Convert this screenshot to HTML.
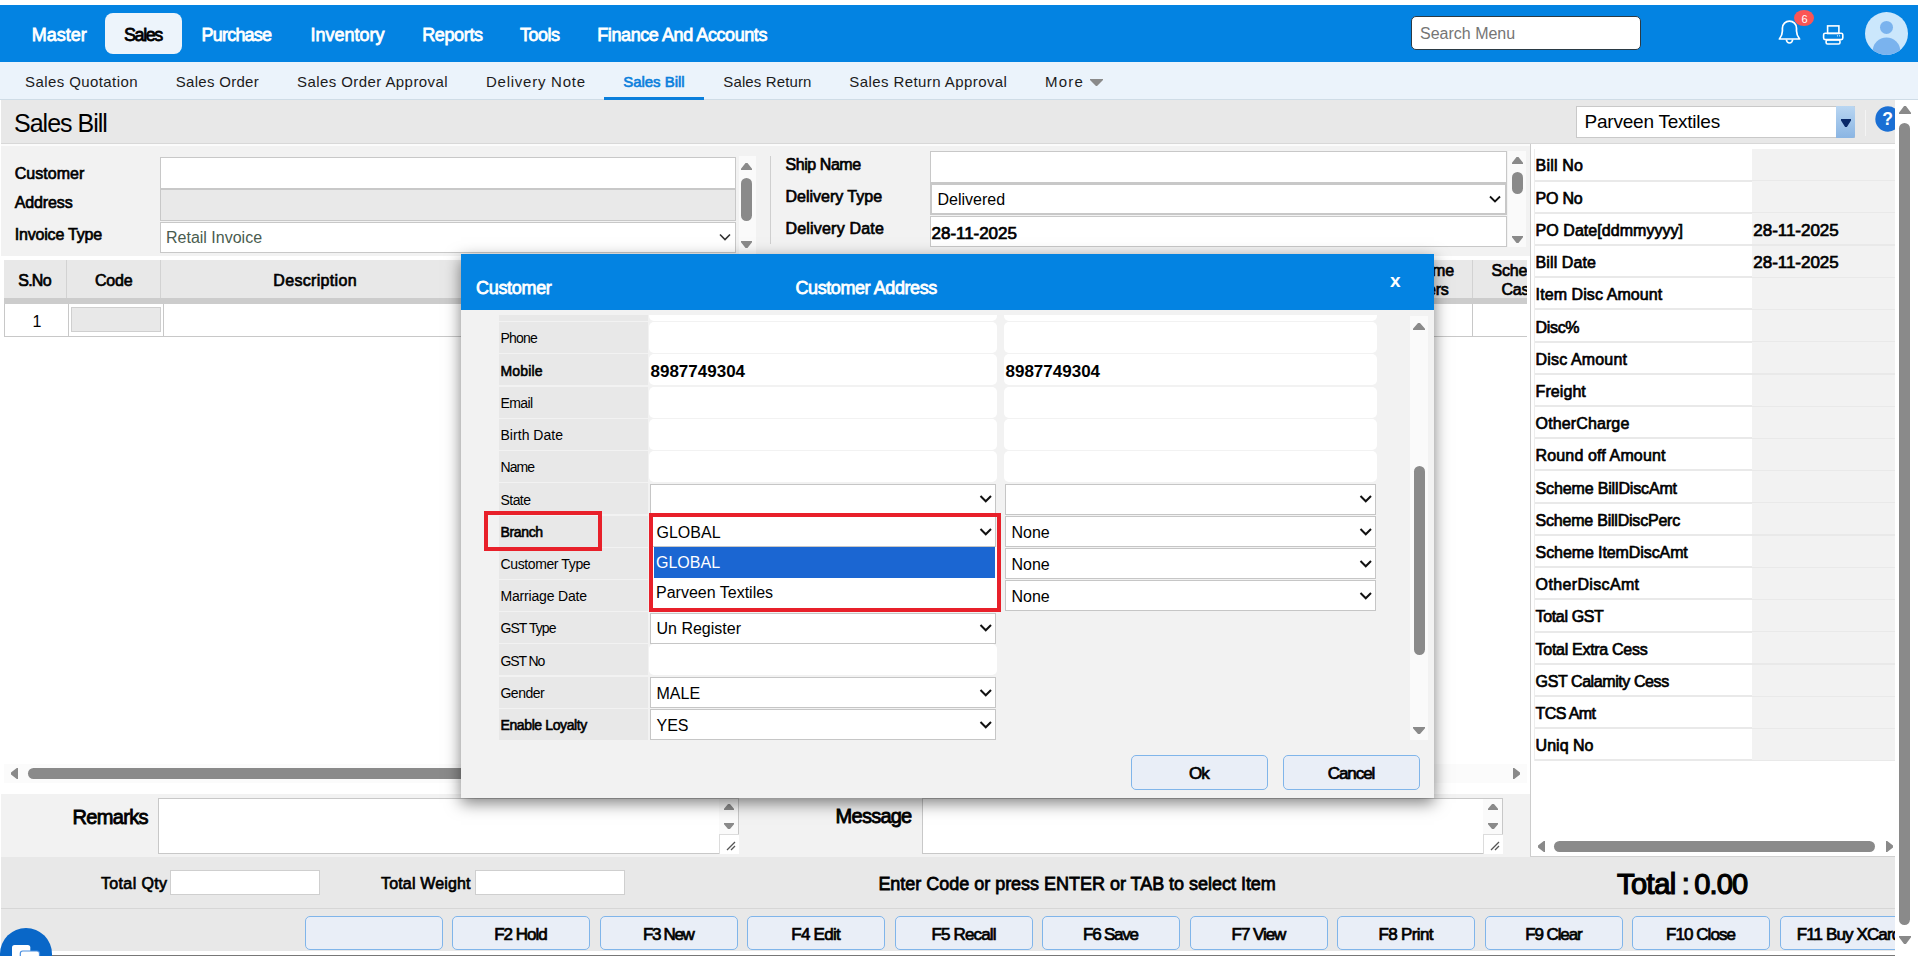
<!DOCTYPE html>
<html><head><meta charset="utf-8">
<style>
*{box-sizing:border-box}
html,body{margin:0;padding:0}
body{width:1918px;height:956px;overflow:hidden;position:relative;background:#fff;font-family:"Liberation Sans",sans-serif;color:#000}
.a{position:absolute}
.t{position:absolute;white-space:nowrap;line-height:1}
</style></head>
<body>
<div class="a" style="left:0px;top:5px;width:1918px;height:57px;background:#0383e2"></div>
<div class="a" style="left:105px;top:13px;width:77px;height:41px;background:#edf4fb;border-radius:8px"></div>
<div class="t" style="left:31.75px;top:26px;font-size:18px;-webkit-text-stroke-width:0.76px;color:#fff;letter-spacing:-0.01px">Master</div>
<div class="t" style="left:124px;top:26px;font-size:18px;-webkit-text-stroke-width:0.76px;color:#000;letter-spacing:-1.425px">Sales</div>
<div class="t" style="left:201.6px;top:26px;font-size:18px;-webkit-text-stroke-width:0.76px;color:#fff;letter-spacing:-0.8px">Purchase</div>
<div class="t" style="left:310.4px;top:26px;font-size:18px;-webkit-text-stroke-width:0.76px;color:#fff;letter-spacing:0.0px">Inventory</div>
<div class="t" style="left:422.2px;top:26px;font-size:18px;-webkit-text-stroke-width:0.76px;color:#fff;letter-spacing:-0.367px">Reports</div>
<div class="t" style="left:520px;top:26px;font-size:18px;-webkit-text-stroke-width:0.76px;color:#fff;letter-spacing:-0.5px">Tools</div>
<div class="t" style="left:597.3px;top:26px;font-size:18px;-webkit-text-stroke-width:0.76px;color:#fff;letter-spacing:-0.421px">Finance And Accounts</div>
<div class="a" style="left:1411px;top:16px;width:230px;height:34px;background:#fff;border:1px solid #2b3a44;border-radius:5px"></div>
<div class="t" style="left:1420px;top:26px;font-size:16px;color:#757575">Search Menu</div>
<svg class="a" style="left:1770px;top:5px" width="80" height="50" viewBox="0 0 80 50">
<path d="M9.4 34 C11.6 31.2 12.4 29 12.4 26 V23.2 A7.05 7.05 0 0 1 26.5 23.2 V26 C26.5 29 27.4 31.2 29.6 34 Z" fill="none" stroke="#fff" stroke-width="1.7" stroke-linejoin="round"/>
<path d="M16.4 34.6 A3.1 3.4 0 0 0 22.6 34.6" fill="none" stroke="#fff" stroke-width="1.7"/>
<ellipse cx="34" cy="13" rx="10" ry="8" fill="#fb5555"/>
<text x="34.5" y="18" font-family="Liberation Sans" font-size="11" fill="#fff" text-anchor="middle">6</text>
<rect x="57.6" y="20.9" width="11.3" height="7.6" fill="none" stroke="#fff" stroke-width="1.6"/>
<rect x="53.6" y="28.2" width="19.2" height="6.4" rx="1.6" fill="none" stroke="#fff" stroke-width="1.6"/>
<rect x="56.1" y="35" width="13.9" height="4" rx="1.4" fill="none" stroke="#fff" stroke-width="1.6"/>
<circle cx="67.5" cy="30.8" r="0.6" fill="#fff"/><circle cx="69.5" cy="30.8" r="0.6" fill="#fff"/>
</svg>
<svg class="a" style="left:1865px;top:12.3px" width="43" height="43" viewBox="0 0 43 43"><defs><clipPath id="cp"><circle cx="21.5" cy="21.5" r="21.5"/></clipPath></defs><circle cx="21.5" cy="21.5" r="21.5" fill="#cbe7fc"/><g clip-path="url(#cp)"><circle cx="21.5" cy="15.4" r="6.5" fill="#7ab3ee"/><ellipse cx="21.5" cy="39.2" rx="13.8" ry="13.7" fill="#7ab3ee"/></g></svg>
<div class="a" style="left:0px;top:62px;width:1918px;height:37px;background:#ebf3fb"></div>
<div class="a" style="left:0px;top:99px;width:1918px;height:1px;background:#cfdce6"></div>
<div class="t" style="left:25px;top:74px;font-size:15px;color:#1b1b1b;letter-spacing:0.414px">Sales Quotation</div>
<div class="t" style="left:175.8px;top:74px;font-size:15px;color:#1b1b1b;letter-spacing:0.29px">Sales Order</div>
<div class="t" style="left:297px;top:74px;font-size:15px;color:#1b1b1b;letter-spacing:0.421px">Sales Order Approval</div>
<div class="t" style="left:486px;top:74px;font-size:15px;color:#1b1b1b;letter-spacing:0.75px">Delivery Note</div>
<div class="t" style="left:723.3px;top:74px;font-size:15px;color:#1b1b1b;letter-spacing:0.127px">Sales Return</div>
<div class="t" style="left:849.3px;top:74px;font-size:15px;color:#1b1b1b;letter-spacing:0.42px">Sales Return Approval</div>
<div class="t" style="left:1045px;top:74px;font-size:15px;color:#1b1b1b;letter-spacing:1.233px">More</div>
<div class="t" style="left:623.2px;top:74px;font-size:15px;-webkit-text-stroke-width:0.63px;color:#0a7fdc;letter-spacing:-0.022px">Sales Bill</div>
<div class="a" style="left:604px;top:97px;width:100px;height:3px;background:#0a7fdc"></div>
<svg class="a" style="left:1089.5px;top:79.25px" width="13" height="6.5" viewBox="0 0 13 6.5"><path d="M0 0 L6.5 6.5 L13 0 Z" fill="#8a8a8a" stroke="#8a8a8a" stroke-width="1.5" stroke-linejoin="round"/></svg>
<div class="a" style="left:1px;top:100px;width:1894px;height:856px;background:#e8e8e8"></div>
<div class="t" style="left:14px;top:111px;font-size:25px;color:#000;letter-spacing:-1.0px">Sales Bill</div>
<div class="a" style="left:1px;top:143px;width:1894px;height:1px;background:#d8d8d8"></div>
<div class="a" style="left:1576px;top:106px;width:279px;height:32px;background:#fff;border:1px solid #c9c9c9"></div>
<div class="t" style="left:1584.6px;top:112px;font-size:19px;color:#000;letter-spacing:-0.233px">Parveen Textiles</div>
<div class="a" style="left:1836px;top:106px;width:19px;height:32px;background:linear-gradient(#b9d6f2,#8ab5e3);border-radius:0 2px 2px 0"></div>
<svg class="a" style="left:1840.5px;top:119.0px" width="10" height="8" viewBox="0 0 10 8"><path d="M0 0 L5.0 8 L10 0 Z" fill="#0a2a6a" stroke="#0a2a6a" stroke-width="1.5" stroke-linejoin="round"/></svg>
<div class="a" style="left:1865px;top:110px;width:1px;height:26px;background:#f4f4f4"></div>
<svg class="a" style="left:1870px;top:104px" width="25" height="30" viewBox="0 0 25 30"><circle cx="18" cy="15" r="12.7" fill="#1a6fd4"/><text x="17.5" y="21.4" font-family="Liberation Sans" font-weight="bold" font-size="17.5" fill="#fff" text-anchor="middle">?</text></svg>
<div class="a" style="left:1px;top:144px;width:1529px;height:112px;background:#f2f2f2"></div>
<div class="a" style="left:1px;top:144px;width:1529px;height:2px;background:#fbfbfb"></div>
<div class="t" style="left:14.7px;top:166px;font-size:16px;-webkit-text-stroke-width:0.67px;letter-spacing:0.029px">Customer</div>
<div class="t" style="left:14.7px;top:195px;font-size:16px;-webkit-text-stroke-width:0.67px;letter-spacing:-0.117px">Address</div>
<div class="t" style="left:14.7px;top:227px;font-size:16px;-webkit-text-stroke-width:0.67px;letter-spacing:-0.182px">Invoice Type</div>
<div class="a" style="left:160px;top:157px;width:576px;height:32px;background:#fff;border:1px solid #c8c8c8"></div>
<div class="a" style="left:160px;top:189px;width:576px;height:32px;background:#e9e9e9;border:1px solid #c8c8c8"></div>
<div class="a" style="left:160px;top:222px;width:576px;height:31px;background:#fff;border:1px solid #c8c8c8"></div>
<div class="t" style="left:166px;top:230px;font-size:16px;color:#4a5c4f">Retail Invoice</div>
<svg class="a" style="left:718px;top:230px" width="14" height="14" viewBox="0 0 14 14"><path d="M2 4.5 L7 9.5 L12 4.5" fill="none" stroke="#333" stroke-width="1.6"/></svg>
<div class="a" style="left:739px;top:156px;width:17px;height:98px;background:#fafafa"></div>
<svg class="a" style="left:740.5px;top:162.5px" width="11" height="7" viewBox="0 0 11 7"><path d="M0 7 L5.5 0 L11 7 Z" fill="#8a8a8a" stroke="#8a8a8a" stroke-width="1.5" stroke-linejoin="round"/></svg>
<div class="a" style="left:741px;top:178px;width:11px;height:43px;background:#8a8a8a;border-radius:6px"></div>
<svg class="a" style="left:740.5px;top:240.5px" width="11" height="7" viewBox="0 0 11 7"><path d="M0 0 L5.5 7 L11 0 Z" fill="#8a8a8a" stroke="#8a8a8a" stroke-width="1.5" stroke-linejoin="round"/></svg>
<div class="a" style="left:770px;top:156px;width:1px;height:88px;background:#cfcfcf"></div>
<div class="t" style="left:785.5px;top:157px;font-size:16px;-webkit-text-stroke-width:0.67px;letter-spacing:-0.438px">Ship Name</div>
<div class="t" style="left:785.5px;top:189px;font-size:16px;-webkit-text-stroke-width:0.67px;letter-spacing:-0.008px">Delivery Type</div>
<div class="t" style="left:785.5px;top:221px;font-size:16px;-webkit-text-stroke-width:0.67px;letter-spacing:0.192px">Delivery Date</div>
<div class="a" style="left:930px;top:151px;width:577px;height:32px;background:#fff;border:1px solid #c8c8c8"></div>
<div class="a" style="left:930px;top:183px;width:577px;height:32px;background:#fff;border:2px solid #c8c8c8"></div>
<div class="t" style="left:937.5px;top:192px;font-size:16px;color:#000">Delivered</div>
<svg class="a" style="left:1488px;top:192px" width="14" height="14" viewBox="0 0 14 14"><path d="M2 4.5 L7 9.5 L12 4.5" fill="none" stroke="#111" stroke-width="1.8"/></svg>
<div class="a" style="left:930px;top:216px;width:577px;height:31px;background:#fff;border:1px solid #c8c8c8"></div>
<div class="t" style="left:931.6px;top:225px;font-size:17px;-webkit-text-stroke-width:0.71px;letter-spacing:-0.044px">28-11-2025</div>
<div class="a" style="left:1508px;top:151px;width:18px;height:96px;background:#fafafa"></div>
<svg class="a" style="left:1511.5px;top:156.5px" width="11" height="7" viewBox="0 0 11 7"><path d="M0 7 L5.5 0 L11 7 Z" fill="#8a8a8a" stroke="#8a8a8a" stroke-width="1.5" stroke-linejoin="round"/></svg>
<div class="a" style="left:1512px;top:172px;width:11px;height:22px;background:#8a8a8a;border-radius:6px"></div>
<svg class="a" style="left:1511.5px;top:235.5px" width="11" height="7" viewBox="0 0 11 7"><path d="M0 0 L5.5 7 L11 0 Z" fill="#8a8a8a" stroke="#8a8a8a" stroke-width="1.5" stroke-linejoin="round"/></svg>
<div class="a" style="left:1px;top:256px;width:1529px;height:538px;background:#fff"></div>
<div class="a" style="left:4px;top:260px;width:1523px;height:38px;background:#e8e8e8"></div>
<div class="a" style="left:66px;top:260px;width:1px;height:38px;background:#d2d2d2"></div>
<div class="a" style="left:160px;top:260px;width:1px;height:38px;background:#d2d2d2"></div>
<div class="a" style="left:1472px;top:260px;width:1px;height:38px;background:#d2d2d2"></div>
<div class="a" style="left:4px;top:298px;width:1523px;height:6px;background:#cccccc"></div>
<div class="a" style="left:4px;top:336px;width:1523px;height:1px;background:#c8c8c8"></div>
<div class="a" style="left:4px;top:304px;width:1px;height:33px;background:#c8c8c8"></div>
<div class="a" style="left:68px;top:304px;width:1px;height:33px;background:#c8c8c8"></div>
<div class="a" style="left:163px;top:304px;width:1px;height:33px;background:#c8c8c8"></div>
<div class="a" style="left:1472px;top:304px;width:1px;height:33px;background:#c8c8c8"></div>
<div class="a" style="left:71px;top:307px;width:90px;height:25px;background:#e8e8e8;border:1px solid #cfcfcf"></div>
<div class="t" style="left:17.0px;width:40px;text-align:center;top:314px;font-size:16px;color:#000">1</div>
<div class="t" style="left:18.2px;top:273px;font-size:16px;-webkit-text-stroke-width:0.67px;letter-spacing:-0.733px">S.No</div>
<div class="t" style="left:94.9px;top:273px;font-size:16px;-webkit-text-stroke-width:0.67px;letter-spacing:-0.167px">Code</div>
<div class="t" style="left:273.3px;top:273px;font-size:16px;-webkit-text-stroke-width:0.67px;letter-spacing:0.33px">Description</div>
<div class="t" style="left:1432px;top:263px;font-size:16px;-webkit-text-stroke-width:0.67px;letter-spacing:-0.2px">me</div>
<div class="t" style="left:1427px;top:282px;font-size:16px;-webkit-text-stroke-width:0.67px;letter-spacing:-0.2px">ers</div>
<div class="a" style="left:1473px;top:255px;width:54px;height:45px;overflow:hidden">
<div class="t" style="left:18.5px;top:8px;font-size:16px;-webkit-text-stroke-width:0.67px;letter-spacing:-0.2px">Scheme</div>
<div class="t" style="left:28.5px;top:27px;font-size:16px;-webkit-text-stroke-width:0.67px;letter-spacing:-0.2px">Cash</div>
</div>
<div class="a" style="left:4px;top:764px;width:1523px;height:19px;background:#fbfbfb"></div>
<svg class="a" style="left:10.5px;top:767.5px" width="7" height="11" viewBox="0 0 7 11"><path d="M7 0 L0 5.5 L7 11 Z" fill="#8a8a8a" stroke="#8a8a8a" stroke-width="1.5" stroke-linejoin="round"/></svg>
<div class="a" style="left:28px;top:768px;width:1100px;height:11px;background:#8a8a8a;border-radius:6px"></div>
<svg class="a" style="left:1512.5px;top:767.5px" width="7" height="11" viewBox="0 0 7 11"><path d="M0 0 L7 5.5 L0 11 Z" fill="#8a8a8a" stroke="#8a8a8a" stroke-width="1.5" stroke-linejoin="round"/></svg>
<div class="a" style="left:1530px;top:144px;width:365px;height:713px;background:#fff"></div>
<div class="a" style="left:1530px;top:144px;width:1px;height:713px;background:#cccccc"></div>
<div class="a" style="left:1534px;top:179.5px;width:361px;height:2px;background:#e9e9e9"></div>
<div class="a" style="left:1752px;top:149.0px;width:143px;height:31px;background:#f2f2f2"></div>
<div class="t" style="left:1535.6px;top:158px;font-size:16px;-webkit-text-stroke-width:0.67px;letter-spacing:0.167px">Bill No</div>
<div class="a" style="left:1534px;top:211.72px;width:361px;height:2px;background:#e9e9e9"></div>
<div class="a" style="left:1752px;top:181.22px;width:143px;height:31px;background:#f2f2f2"></div>
<div class="t" style="left:1535.6px;top:191px;font-size:16px;-webkit-text-stroke-width:0.67px;letter-spacing:-0.25px">PO No</div>
<div class="a" style="left:1534px;top:243.94px;width:361px;height:2px;background:#e9e9e9"></div>
<div class="a" style="left:1752px;top:213.44px;width:143px;height:31px;background:#f2f2f2"></div>
<div class="t" style="left:1535.6px;top:223px;font-size:16px;-webkit-text-stroke-width:0.67px;letter-spacing:0.044px">PO Date[ddmmyyyy]</div>
<div class="t" style="left:1753.3px;top:222px;font-size:17px;-webkit-text-stroke-width:0.71px;letter-spacing:-0.033px">28-11-2025</div>
<div class="a" style="left:1534px;top:276.15999999999997px;width:361px;height:2px;background:#e9e9e9"></div>
<div class="a" style="left:1752px;top:245.66px;width:143px;height:31px;background:#f2f2f2"></div>
<div class="t" style="left:1535.6px;top:255px;font-size:16px;-webkit-text-stroke-width:0.67px;letter-spacing:0.088px">Bill Date</div>
<div class="t" style="left:1753.3px;top:254px;font-size:17px;-webkit-text-stroke-width:0.71px;letter-spacing:-0.033px">28-11-2025</div>
<div class="a" style="left:1534px;top:308.38px;width:361px;height:2px;background:#e9e9e9"></div>
<div class="a" style="left:1752px;top:277.88px;width:143px;height:31px;background:#f2f2f2"></div>
<div class="t" style="left:1535.6px;top:287px;font-size:16px;-webkit-text-stroke-width:0.67px;letter-spacing:0.087px">Item Disc Amount</div>
<div class="a" style="left:1534px;top:340.6px;width:361px;height:2px;background:#e9e9e9"></div>
<div class="a" style="left:1752px;top:310.1px;width:143px;height:31px;background:#f2f2f2"></div>
<div class="t" style="left:1535.6px;top:320px;font-size:16px;-webkit-text-stroke-width:0.67px;letter-spacing:-0.35px">Disc%</div>
<div class="a" style="left:1534px;top:372.82px;width:361px;height:2px;background:#e9e9e9"></div>
<div class="a" style="left:1752px;top:342.32px;width:143px;height:31px;background:#f2f2f2"></div>
<div class="t" style="left:1535.6px;top:352px;font-size:16px;-webkit-text-stroke-width:0.67px;letter-spacing:0.15px">Disc Amount</div>
<div class="a" style="left:1534px;top:405.03999999999996px;width:361px;height:2px;background:#e9e9e9"></div>
<div class="a" style="left:1752px;top:374.53999999999996px;width:143px;height:31px;background:#f2f2f2"></div>
<div class="t" style="left:1535.6px;top:384px;font-size:16px;-webkit-text-stroke-width:0.67px;letter-spacing:0.067px">Freight</div>
<div class="a" style="left:1534px;top:437.26px;width:361px;height:2px;background:#e9e9e9"></div>
<div class="a" style="left:1752px;top:406.76px;width:143px;height:31px;background:#f2f2f2"></div>
<div class="t" style="left:1535.6px;top:416px;font-size:16px;-webkit-text-stroke-width:0.67px;letter-spacing:0.12px">OtherCharge</div>
<div class="a" style="left:1534px;top:469.48px;width:361px;height:2px;background:#e9e9e9"></div>
<div class="a" style="left:1752px;top:438.98px;width:143px;height:31px;background:#f2f2f2"></div>
<div class="t" style="left:1535.6px;top:448px;font-size:16px;-webkit-text-stroke-width:0.67px;letter-spacing:0.133px">Round off Amount</div>
<div class="a" style="left:1534px;top:501.7px;width:361px;height:2px;background:#e9e9e9"></div>
<div class="a" style="left:1752px;top:471.2px;width:143px;height:31px;background:#f2f2f2"></div>
<div class="t" style="left:1535.6px;top:481px;font-size:16px;-webkit-text-stroke-width:0.67px;letter-spacing:-0.153px">Scheme BillDiscAmt</div>
<div class="a" style="left:1534px;top:533.92px;width:361px;height:2px;background:#e9e9e9"></div>
<div class="a" style="left:1752px;top:503.41999999999996px;width:143px;height:31px;background:#f2f2f2"></div>
<div class="t" style="left:1535.6px;top:513px;font-size:16px;-webkit-text-stroke-width:0.67px;letter-spacing:-0.217px">Scheme BillDiscPerc</div>
<div class="a" style="left:1534px;top:566.14px;width:361px;height:2px;background:#e9e9e9"></div>
<div class="a" style="left:1752px;top:535.64px;width:143px;height:31px;background:#f2f2f2"></div>
<div class="t" style="left:1535.6px;top:545px;font-size:16px;-webkit-text-stroke-width:0.67px;letter-spacing:-0.094px">Scheme ItemDiscAmt</div>
<div class="a" style="left:1534px;top:598.36px;width:361px;height:2px;background:#e9e9e9"></div>
<div class="a" style="left:1752px;top:567.86px;width:143px;height:31px;background:#f2f2f2"></div>
<div class="t" style="left:1535.6px;top:577px;font-size:16px;-webkit-text-stroke-width:0.67px;letter-spacing:0.355px">OtherDiscAmt</div>
<div class="a" style="left:1534px;top:630.5799999999999px;width:361px;height:2px;background:#e9e9e9"></div>
<div class="a" style="left:1752px;top:600.0799999999999px;width:143px;height:31px;background:#f2f2f2"></div>
<div class="t" style="left:1535.6px;top:609px;font-size:16px;-webkit-text-stroke-width:0.67px;letter-spacing:-0.362px">Total GST</div>
<div class="a" style="left:1534px;top:662.8px;width:361px;height:2px;background:#e9e9e9"></div>
<div class="a" style="left:1752px;top:632.3px;width:143px;height:31px;background:#f2f2f2"></div>
<div class="t" style="left:1535.6px;top:642px;font-size:16px;-webkit-text-stroke-width:0.67px;letter-spacing:-0.293px">Total Extra Cess</div>
<div class="a" style="left:1534px;top:695.02px;width:361px;height:2px;background:#e9e9e9"></div>
<div class="a" style="left:1752px;top:664.52px;width:143px;height:31px;background:#f2f2f2"></div>
<div class="t" style="left:1535.6px;top:674px;font-size:16px;-webkit-text-stroke-width:0.67px;letter-spacing:-0.412px">GST Calamity Cess</div>
<div class="a" style="left:1534px;top:727.24px;width:361px;height:2px;background:#e9e9e9"></div>
<div class="a" style="left:1752px;top:696.74px;width:143px;height:31px;background:#f2f2f2"></div>
<div class="t" style="left:1535.6px;top:706px;font-size:16px;-webkit-text-stroke-width:0.67px;letter-spacing:-0.6px">TCS Amt</div>
<div class="a" style="left:1534px;top:759.46px;width:361px;height:2px;background:#e9e9e9"></div>
<div class="a" style="left:1752px;top:728.96px;width:143px;height:31px;background:#f2f2f2"></div>
<div class="t" style="left:1535.6px;top:738px;font-size:16px;-webkit-text-stroke-width:0.67px;letter-spacing:0.017px">Uniq No</div>
<div class="a" style="left:1534px;top:149px;width:1px;height:612px;background:#eeeeee"></div>
<svg class="a" style="left:1537.5px;top:840.5px" width="7" height="11" viewBox="0 0 7 11"><path d="M7 0 L0 5.5 L7 11 Z" fill="#8a8a8a" stroke="#8a8a8a" stroke-width="1.5" stroke-linejoin="round"/></svg>
<div class="a" style="left:1554px;top:841px;width:321px;height:11px;background:#8a8a8a;border-radius:6px"></div>
<svg class="a" style="left:1885.5px;top:840.5px" width="7" height="11" viewBox="0 0 7 11"><path d="M0 0 L7 5.5 L0 11 Z" fill="#8a8a8a" stroke="#8a8a8a" stroke-width="1.5" stroke-linejoin="round"/></svg>
<div class="a" style="left:1530px;top:856px;width:365px;height:1px;background:#d0d0d0"></div>
<div class="a" style="left:1px;top:794px;width:1529px;height:63px;background:#f2f2f2"></div>
<div class="t" style="left:72.4px;top:807px;font-size:20px;-webkit-text-stroke-width:0.84px;letter-spacing:-0.633px">Remarks</div>
<div class="a" style="left:158px;top:798px;width:581px;height:56px;background:#fff;border:1px solid #c8c8c8"></div>
<div class="a" style="left:719px;top:799px;width:19px;height:54px;background:#fafafa"></div>
<svg class="a" style="left:723.5px;top:804.0px" width="10" height="6" viewBox="0 0 10 6"><path d="M0 6 L5.0 0 L10 6 Z" fill="#8a8a8a" stroke="#8a8a8a" stroke-width="1.5" stroke-linejoin="round"/></svg>
<svg class="a" style="left:723.5px;top:823.0px" width="10" height="6" viewBox="0 0 10 6"><path d="M0 0 L5.0 6 L10 0 Z" fill="#8a8a8a" stroke="#8a8a8a" stroke-width="1.5" stroke-linejoin="round"/></svg>
<div class="a" style="left:719px;top:834px;width:20px;height:20px;background:#fff;border:1px solid #dcdcdc;border-right:0;border-bottom:0"></div>
<svg class="a" style="left:725px;top:840px" width="12" height="12" viewBox="0 0 12 12"><path d="M2 10 L10 2 M6 10 L10 6" stroke="#555" stroke-width="1.3"/></svg>
<div class="t" style="left:835.6px;top:806px;font-size:20px;-webkit-text-stroke-width:0.84px;letter-spacing:-0.75px">Message</div>
<div class="a" style="left:922px;top:798px;width:581px;height:56px;background:#fff;border:1px solid #c8c8c8"></div>
<div class="a" style="left:1483px;top:799px;width:19px;height:54px;background:#fafafa"></div>
<svg class="a" style="left:1487.5px;top:804.0px" width="10" height="6" viewBox="0 0 10 6"><path d="M0 6 L5.0 0 L10 6 Z" fill="#8a8a8a" stroke="#8a8a8a" stroke-width="1.5" stroke-linejoin="round"/></svg>
<svg class="a" style="left:1487.5px;top:823.0px" width="10" height="6" viewBox="0 0 10 6"><path d="M0 0 L5.0 6 L10 0 Z" fill="#8a8a8a" stroke="#8a8a8a" stroke-width="1.5" stroke-linejoin="round"/></svg>
<div class="a" style="left:1483px;top:834px;width:20px;height:20px;background:#fff;border:1px solid #dcdcdc;border-right:0;border-bottom:0"></div>
<svg class="a" style="left:1489px;top:840px" width="12" height="12" viewBox="0 0 12 12"><path d="M2 10 L10 2 M6 10 L10 6" stroke="#555" stroke-width="1.3"/></svg>
<div class="a" style="left:1px;top:908px;width:1894px;height:1px;background:#d6d6d6"></div>
<div class="t" style="left:100.9px;top:876px;font-size:16px;-webkit-text-stroke-width:0.67px;letter-spacing:0.375px">Total Qty</div>
<div class="a" style="left:170px;top:870px;width:150px;height:25px;background:#fff;border:1px solid #cfcfcf"></div>
<div class="t" style="left:381px;top:876px;font-size:16px;-webkit-text-stroke-width:0.67px;letter-spacing:0.164px">Total Weight</div>
<div class="a" style="left:475px;top:870px;width:150px;height:25px;background:#fff;border:1px solid #cfcfcf"></div>
<div class="t" style="left:878.4px;top:875px;font-size:18px;-webkit-text-stroke-width:0.76px;letter-spacing:-0.022px">Enter Code or press ENTER or TAB to select Item</div>
<div class="t" style="left:1617.1px;top:870px;font-size:29px;-webkit-text-stroke-width:1.22px;letter-spacing:-0.55px">Total</div>
<div class="t" style="left:1681.8px;top:870px;font-size:29px;-webkit-text-stroke-width:1.22px;letter-spacing:0px">:</div>
<div class="t" style="left:1694.2px;top:870px;font-size:29px;-webkit-text-stroke-width:1.22px;letter-spacing:-0.867px">0.00</div>
<div class="a" style="left:0;top:900px;width:1895px;height:56px;overflow:hidden">
<div class="a" style="left:305px;top:16.3px;width:138px;height:34.2px;background:#e9eef7;border:1px solid #80b5ea;border-radius:5px"></div>
<div class="a" style="left:452px;top:16.3px;width:138px;height:34.2px;background:#e9eef7;border:1px solid #80b5ea;border-radius:5px"></div>
<div class="t" style="left:451.495px;width:138px;text-align:center;top:26px;font-size:17px;-webkit-text-stroke-width:0.7px;letter-spacing:-1.010px">F2 Hold</div>
<div class="a" style="left:600px;top:16.3px;width:138px;height:34.2px;background:#e9eef7;border:1px solid #80b5ea;border-radius:5px"></div>
<div class="t" style="left:599.32px;width:138px;text-align:center;top:26px;font-size:17px;-webkit-text-stroke-width:0.7px;letter-spacing:-1.360px">F3 New</div>
<div class="a" style="left:747px;top:16.3px;width:138px;height:34.2px;background:#e9eef7;border:1px solid #80b5ea;border-radius:5px"></div>
<div class="t" style="left:746.6325px;width:138px;text-align:center;top:26px;font-size:17px;-webkit-text-stroke-width:0.7px;letter-spacing:-0.735px">F4 Edit</div>
<div class="a" style="left:895px;top:16.3px;width:138px;height:34.2px;background:#e9eef7;border:1px solid #80b5ea;border-radius:5px"></div>
<div class="t" style="left:894.578125px;width:138px;text-align:center;top:26px;font-size:17px;-webkit-text-stroke-width:0.7px;letter-spacing:-0.844px">F5 Recall</div>
<div class="a" style="left:1042px;top:16.3px;width:138px;height:34.2px;background:#e9eef7;border:1px solid #80b5ea;border-radius:5px"></div>
<div class="t" style="left:1041.39px;width:138px;text-align:center;top:26px;font-size:17px;-webkit-text-stroke-width:0.7px;letter-spacing:-1.220px">F6 Save</div>
<div class="a" style="left:1190px;top:16.3px;width:138px;height:34.2px;background:#e9eef7;border:1px solid #80b5ea;border-radius:5px"></div>
<div class="t" style="left:1189.4733333333334px;width:138px;text-align:center;top:26px;font-size:17px;-webkit-text-stroke-width:0.7px;letter-spacing:-1.053px">F7 View</div>
<div class="a" style="left:1337px;top:16.3px;width:138px;height:34.2px;background:#e9eef7;border:1px solid #80b5ea;border-radius:5px"></div>
<div class="t" style="left:1336.6914285714286px;width:138px;text-align:center;top:26px;font-size:17px;-webkit-text-stroke-width:0.7px;letter-spacing:-0.617px">F8 Print</div>
<div class="a" style="left:1485px;top:16.3px;width:138px;height:34.2px;background:#e9eef7;border:1px solid #80b5ea;border-radius:5px"></div>
<div class="t" style="left:1484.4492857142857px;width:138px;text-align:center;top:26px;font-size:17px;-webkit-text-stroke-width:0.7px;letter-spacing:-1.101px">F9 Clear</div>
<div class="a" style="left:1632px;top:16.3px;width:138px;height:34.2px;background:#e9eef7;border:1px solid #80b5ea;border-radius:5px"></div>
<div class="t" style="left:1631.5375px;width:138px;text-align:center;top:26px;font-size:17px;-webkit-text-stroke-width:0.7px;letter-spacing:-0.925px">F10 Close</div>
<div class="a" style="left:1780px;top:16.3px;width:138px;height:34.2px;background:#e9eef7;border:1px solid #80b5ea;border-radius:5px"></div>
<div class="t" style="left:1779.5583333333334px;width:138px;text-align:center;top:26px;font-size:17px;-webkit-text-stroke-width:0.7px;letter-spacing:-0.883px">F11 Buy XCard</div>
</div>
<div class="a" style="left:0px;top:951px;width:1918px;height:5px;background:#fff"></div>
<div class="a" style="left:52px;top:954.5px;width:1843px;height:1.5px;background:#777"></div>
<svg class="a" style="left:0;top:928px" width="56" height="28" viewBox="0 0 56 28"><circle cx="26" cy="26" r="26" fill="#0967c8"/><rect x="12" y="17" width="18.3" height="16" rx="2.5" fill="#fff"/><rect x="20.3" y="23" width="19.2" height="12" rx="2.5" fill="#fff" stroke="#4a8fe0" stroke-width="1.2"/></svg>
<div class="a" style="left:1895px;top:100px;width:23px;height:856px;background:#fff"></div>
<svg class="a" style="left:1898.5px;top:106.0px" width="12" height="8" viewBox="0 0 12 8"><path d="M0 8 L6.0 0 L12 8 Z" fill="#8a8a8a" stroke="#8a8a8a" stroke-width="1.5" stroke-linejoin="round"/></svg>
<div class="a" style="left:1899px;top:123px;width:11px;height:802px;background:#8a8a8a;border-radius:6px"></div>
<svg class="a" style="left:1898.5px;top:936.0px" width="12" height="8" viewBox="0 0 12 8"><path d="M0 0 L6.0 8 L12 0 Z" fill="#8a8a8a" stroke="#8a8a8a" stroke-width="1.5" stroke-linejoin="round"/></svg>
<div class="a" style="left:461px;top:254px;width:973px;height:544px;background:#f2f2f2;box-shadow:0 5px 15px rgba(0,0,0,0.5)"></div>
<div class="a" style="left:461px;top:254px;width:973px;height:56px;background:#0383e2"></div>
<div class="t" style="left:476px;top:279px;font-size:18px;-webkit-text-stroke-width:0.76px;color:#fff;letter-spacing:-0.314px">Customer</div>
<div class="t" style="left:795.5px;top:279px;font-size:18px;-webkit-text-stroke-width:0.76px;color:#fff;letter-spacing:-0.42px">Customer Address</div>
<div class="t" style="left:1390px;top:271px;font-size:19px;font-weight:bold;color:#fff">x</div>
<div class="a" style="left:461px;top:315px;width:973px;height:424.5px;overflow:hidden">
<div class="a" style="left:38.0px;top:-25.019999999999982px;width:149px;height:31px;background:#e8e8e8"></div>
<div class="a" style="left:188.0px;top:-25.019999999999982px;width:348px;height:31px;background:#fff;border-radius:5px"></div>
<div class="a" style="left:543.0px;top:-25.019999999999982px;width:373px;height:31px;background:#fff;border-radius:5px"></div>
<div class="a" style="left:38.0px;top:7.199999999999989px;width:149px;height:31px;background:#e8e8e8"></div>
<div class="t" style="left:39.5px;top:16.0px;font-size:14px;letter-spacing:-0.825px">Phone</div>
<div class="a" style="left:188.0px;top:7.199999999999989px;width:348px;height:31px;background:#fff;border-radius:5px"></div>
<div class="a" style="left:543.0px;top:7.199999999999989px;width:373px;height:31px;background:#fff;border-radius:5px"></div>
<div class="a" style="left:38.0px;top:39.41999999999996px;width:149px;height:31px;background:#e8e8e8"></div>
<div class="t" style="left:39.5px;top:49.0px;font-size:14px;-webkit-text-stroke-width:0.59px;letter-spacing:0.14px">Mobile</div>
<div class="a" style="left:188.0px;top:39.41999999999996px;width:348px;height:31px;background:#fff;border-radius:5px"></div>
<div class="t" style="left:189.5px;top:48.0px;font-size:17px;font-weight:bold">8987749304</div>
<div class="a" style="left:543.0px;top:39.41999999999996px;width:373px;height:31px;background:#fff;border-radius:5px"></div>
<div class="t" style="left:544.5px;top:48.0px;font-size:17px;font-weight:bold">8987749304</div>
<div class="a" style="left:38.0px;top:71.63999999999999px;width:149px;height:31px;background:#e8e8e8"></div>
<div class="t" style="left:39.5px;top:81.0px;font-size:14px;letter-spacing:-0.625px">Email</div>
<div class="a" style="left:188.0px;top:71.63999999999999px;width:348px;height:31px;background:#fff;border-radius:5px"></div>
<div class="a" style="left:543.0px;top:71.63999999999999px;width:373px;height:31px;background:#fff;border-radius:5px"></div>
<div class="a" style="left:38.0px;top:103.86000000000001px;width:149px;height:31px;background:#e8e8e8"></div>
<div class="t" style="left:39.5px;top:113.0px;font-size:14px;letter-spacing:0.033px">Birth Date</div>
<div class="a" style="left:188.0px;top:103.86000000000001px;width:348px;height:31px;background:#fff;border-radius:5px"></div>
<div class="a" style="left:543.0px;top:103.86000000000001px;width:373px;height:31px;background:#fff;border-radius:5px"></div>
<div class="a" style="left:38.0px;top:136.07999999999998px;width:149px;height:31px;background:#e8e8e8"></div>
<div class="t" style="left:39.5px;top:145.0px;font-size:14px;letter-spacing:-0.933px">Name</div>
<div class="a" style="left:188.0px;top:136.07999999999998px;width:348px;height:31px;background:#fff;border-radius:5px"></div>
<div class="a" style="left:543.0px;top:136.07999999999998px;width:373px;height:31px;background:#fff;border-radius:5px"></div>
<div class="a" style="left:38.0px;top:168.29999999999995px;width:149px;height:31px;background:#e8e8e8"></div>
<div class="t" style="left:39.5px;top:178.0px;font-size:14px;letter-spacing:-0.55px">State</div>
<div class="a" style="left:189.0px;top:168.79999999999995px;width:346px;height:31px;background:#fff;border:1px solid #c6c6c6"></div>
<svg class="a" style="left:518.0px;top:177.29999999999995px" width="14" height="14" viewBox="0 0 14 14"><path d="M1.5 4 L6.75 9.25 L12 4" fill="none" stroke="#111" stroke-width="2"/></svg>
<div class="a" style="left:544.0px;top:168.79999999999995px;width:371px;height:31px;background:#fff;border:1px solid #c6c6c6"></div>
<svg class="a" style="left:898.0px;top:177.29999999999995px" width="14" height="14" viewBox="0 0 14 14"><path d="M1.5 4 L6.75 9.25 L12 4" fill="none" stroke="#111" stroke-width="2"/></svg>
<div class="a" style="left:38.0px;top:200.51999999999998px;width:149px;height:31px;background:#e8e8e8"></div>
<div class="t" style="left:39.5px;top:210.0px;font-size:14px;-webkit-text-stroke-width:0.59px;letter-spacing:-0.36px">Branch</div>
<div class="a" style="left:189.0px;top:201.01999999999998px;width:346px;height:31px;background:#fff;border:1px solid #c6c6c6"></div>
<div class="t" style="left:195.5px;top:210.0px;font-size:16px">GLOBAL</div>
<svg class="a" style="left:518.0px;top:209.51999999999998px" width="14" height="14" viewBox="0 0 14 14"><path d="M1.5 4 L6.75 9.25 L12 4" fill="none" stroke="#111" stroke-width="2"/></svg>
<div class="a" style="left:544.0px;top:201.01999999999998px;width:371px;height:31px;background:#fff;border:1px solid #c6c6c6"></div>
<div class="t" style="left:550.5px;top:210.0px;font-size:16px">None</div>
<svg class="a" style="left:898.0px;top:209.51999999999998px" width="14" height="14" viewBox="0 0 14 14"><path d="M1.5 4 L6.75 9.25 L12 4" fill="none" stroke="#111" stroke-width="2"/></svg>
<div class="a" style="left:38.0px;top:232.74px;width:149px;height:31px;background:#e8e8e8"></div>
<div class="t" style="left:39.5px;top:242.0px;font-size:14px;letter-spacing:-0.383px">Customer Type</div>
<div class="a" style="left:189.0px;top:233.24px;width:346px;height:31px;background:#fff;border:1px solid #c6c6c6"></div>
<svg class="a" style="left:518.0px;top:241.74px" width="14" height="14" viewBox="0 0 14 14"><path d="M1.5 4 L6.75 9.25 L12 4" fill="none" stroke="#111" stroke-width="2"/></svg>
<div class="a" style="left:544.0px;top:233.24px;width:371px;height:31px;background:#fff;border:1px solid #c6c6c6"></div>
<div class="t" style="left:550.5px;top:242.0px;font-size:16px">None</div>
<svg class="a" style="left:898.0px;top:241.74px" width="14" height="14" viewBox="0 0 14 14"><path d="M1.5 4 L6.75 9.25 L12 4" fill="none" stroke="#111" stroke-width="2"/></svg>
<div class="a" style="left:38.0px;top:264.96000000000004px;width:149px;height:31px;background:#e8e8e8"></div>
<div class="t" style="left:39.5px;top:274.0px;font-size:14px;letter-spacing:-0.175px">Marriage Date</div>
<div class="a" style="left:189.0px;top:265.46000000000004px;width:346px;height:31px;background:#fff;border:1px solid #c6c6c6"></div>
<svg class="a" style="left:518.0px;top:273.96000000000004px" width="14" height="14" viewBox="0 0 14 14"><path d="M1.5 4 L6.75 9.25 L12 4" fill="none" stroke="#111" stroke-width="2"/></svg>
<div class="a" style="left:544.0px;top:265.46000000000004px;width:371px;height:31px;background:#fff;border:1px solid #c6c6c6"></div>
<div class="t" style="left:550.5px;top:274.0px;font-size:16px">None</div>
<svg class="a" style="left:898.0px;top:273.96000000000004px" width="14" height="14" viewBox="0 0 14 14"><path d="M1.5 4 L6.75 9.25 L12 4" fill="none" stroke="#111" stroke-width="2"/></svg>
<div class="a" style="left:38.0px;top:297.18000000000006px;width:149px;height:31px;background:#e8e8e8"></div>
<div class="t" style="left:39.5px;top:306.0px;font-size:14px;letter-spacing:-0.943px">GST Type</div>
<div class="a" style="left:189.0px;top:297.68000000000006px;width:346px;height:31px;background:#fff;border:1px solid #c6c6c6"></div>
<div class="t" style="left:195.5px;top:306.0px;font-size:16px">Un Register</div>
<svg class="a" style="left:518.0px;top:306.18000000000006px" width="14" height="14" viewBox="0 0 14 14"><path d="M1.5 4 L6.75 9.25 L12 4" fill="none" stroke="#111" stroke-width="2"/></svg>
<div class="a" style="left:38.0px;top:329.4px;width:149px;height:31px;background:#e8e8e8"></div>
<div class="t" style="left:39.5px;top:339.0px;font-size:14px;letter-spacing:-1.1px">GST No</div>
<div class="a" style="left:188.0px;top:329.4px;width:348px;height:31px;background:#fff;border-radius:5px"></div>
<div class="a" style="left:38.0px;top:361.6199999999999px;width:149px;height:31px;background:#e8e8e8"></div>
<div class="t" style="left:39.5px;top:371.0px;font-size:14px;letter-spacing:-0.52px">Gender</div>
<div class="a" style="left:189.0px;top:362.1199999999999px;width:346px;height:31px;background:#fff;border:1px solid #c6c6c6"></div>
<div class="t" style="left:195.5px;top:371.0px;font-size:16px">MALE</div>
<svg class="a" style="left:518.0px;top:370.6199999999999px" width="14" height="14" viewBox="0 0 14 14"><path d="M1.5 4 L6.75 9.25 L12 4" fill="none" stroke="#111" stroke-width="2"/></svg>
<div class="a" style="left:38.0px;top:393.8399999999999px;width:149px;height:31px;background:#e8e8e8"></div>
<div class="t" style="left:39.5px;top:403.0px;font-size:14px;-webkit-text-stroke-width:0.59px;letter-spacing:-0.392px">Enable Loyalty</div>
<div class="a" style="left:189.0px;top:394.3399999999999px;width:346px;height:31px;background:#fff;border:1px solid #c6c6c6"></div>
<div class="t" style="left:195.5px;top:403.0px;font-size:16px">YES</div>
<svg class="a" style="left:518.0px;top:402.8399999999999px" width="14" height="14" viewBox="0 0 14 14"><path d="M1.5 4 L6.75 9.25 L12 4" fill="none" stroke="#111" stroke-width="2"/></svg>
</div>
<div class="a" style="left:1410px;top:316px;width:18px;height:424px;background:#fafafa"></div>
<svg class="a" style="left:1413.0px;top:322.5px" width="12" height="7" viewBox="0 0 12 7"><path d="M0 7 L6.0 0 L12 7 Z" fill="#8a8a8a" stroke="#8a8a8a" stroke-width="1.5" stroke-linejoin="round"/></svg>
<div class="a" style="left:1414px;top:466px;width:11px;height:189px;background:#8a8a8a;border-radius:6px"></div>
<svg class="a" style="left:1413.0px;top:726.5px" width="12" height="7" viewBox="0 0 12 7"><path d="M0 0 L6.0 7 L12 0 Z" fill="#8a8a8a" stroke="#8a8a8a" stroke-width="1.5" stroke-linejoin="round"/></svg>
<div class="a" style="left:650px;top:547px;width:347px;height:62px;background:#fff"></div>
<div class="a" style="left:654px;top:547px;width:341px;height:31px;background:#1b66d2"></div>
<div class="t" style="left:656px;top:555px;font-size:16px;color:#fff">GLOBAL</div>
<div class="t" style="left:656px;top:585px;font-size:16px;color:#000">Parveen Textiles</div>
<div class="a" style="left:484.4px;top:511px;width:117.6px;height:39.6px;border:4.6px solid #e8202a"></div>
<div class="a" style="left:649px;top:513px;width:352px;height:99px;border:4.6px solid #e8202a"></div>
<div class="a" style="left:1131px;top:755px;width:137px;height:35px;background:#e9eef7;border:1px solid #80b5ea;border-radius:5px"></div>
<div class="t" style="left:1189px;top:765px;font-size:17px;-webkit-text-stroke-width:0.71px;letter-spacing:-1.0px">Ok</div>
<div class="a" style="left:1283px;top:755px;width:137px;height:35px;background:#e9eef7;border:1px solid #80b5ea;border-radius:5px"></div>
<div class="t" style="left:1327.8px;top:765px;font-size:17px;-webkit-text-stroke-width:0.71px;letter-spacing:-1.08px">Cancel</div>
</body></html>
